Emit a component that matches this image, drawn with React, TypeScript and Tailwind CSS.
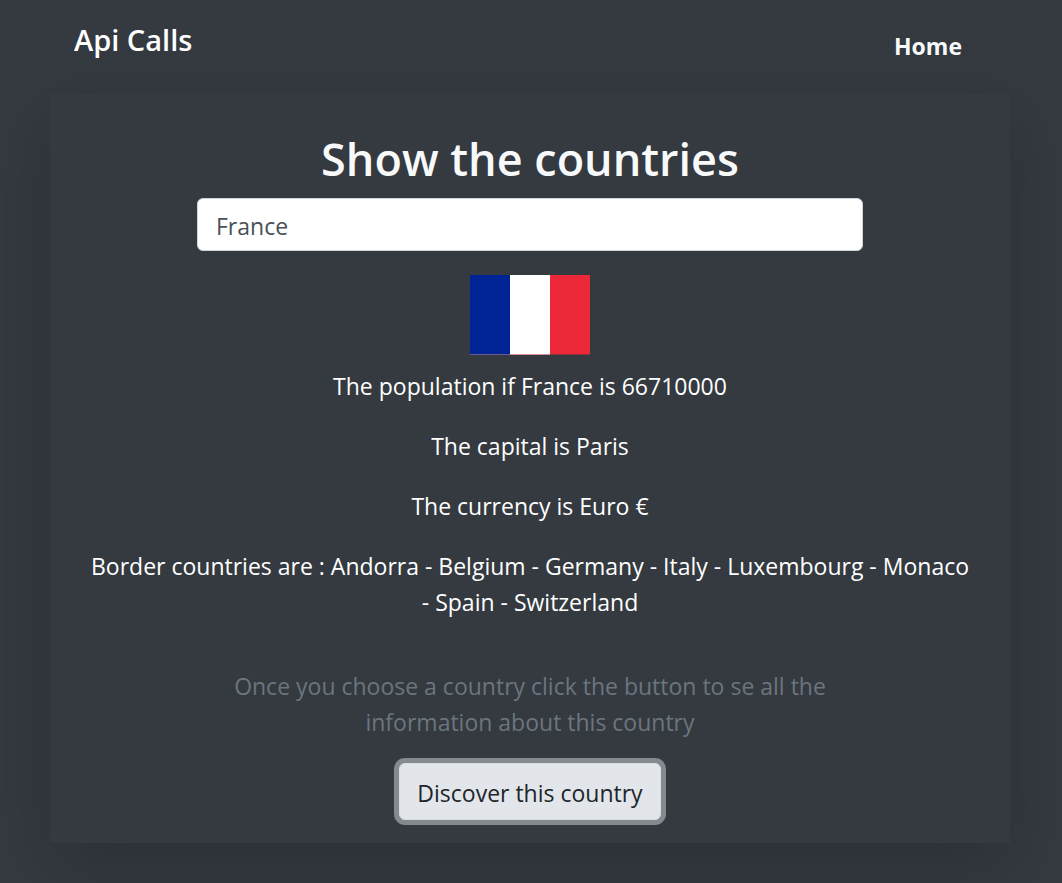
const country = {
  name: 'France',
  population: 66710000,
  capital: 'Paris',
  currency: 'Euro €',
  borders: ['Andorra', 'Belgium', 'Germany', 'Italy', 'Luxembourg', 'Monaco', 'Spain', 'Switzerland'],
};

function Header() {
  return (
    <header className="flex h-[93px] items-start justify-between px-6 pt-[18px]">
      <h3 className="text-[29px] leading-[44px] font-semibold text-white">Api Calls</h3>
      <nav className="pt-[10px] pr-6">
        <a href="#home" className="block text-[23px] leading-9 font-bold text-[#f8f9fa]">
          Home
        </a>
      </nav>
    </header>
  );
}

function FrenchFlag() {
  return (
    <svg role="img" aria-label="Flag of France" viewBox="0 0 120 80" className="mt-6 h-20 w-[120px]">
      <rect width="40" height="79" fill="#002395" />
      <rect x="40" width="40" height="79" fill="#fff" />
      <rect x="80" width="40" height="79" fill="#ed2939" />
      <rect y="79" width="40" height="1" fill="#665a9b" />
      <rect x="40" y="79" width="40" height="1" fill="#d38e98" />
      <rect x="80" y="79" width="40" height="1" fill="#91333f" />
    </svg>
  );
}

export default function App() {
  return (
    <div className="min-h-screen bg-[#343a40] pr-0.5 pb-10 font-['Open_Sans','Noto_Sans',sans-serif]">
      <div className="mx-auto max-w-[960px]">
        <Header />
        <main className="flex flex-col items-center bg-[#343a40] px-9 pt-[37px] pb-[23px] text-center text-[23px] leading-9 text-white shadow-[0_24px_72px_rgba(0,0,0,0.175)]">
          <h1 className="text-[45px] leading-[58px] font-semibold text-[#f8f9fa]">Show the countries</h1>
          <input
            type="text"
            aria-label="Country"
            defaultValue={country.name}
            className="mt-[10px] h-[53px] w-3/4 rounded-md border border-[#ced4da] bg-white px-[18px] pt-0.5 text-[23px] text-[#495057] outline-none"
          />
          <FrenchFlag />
          <div className="mt-[13px] flex flex-col gap-6">
            <p>The population if {country.name} is {country.population}</p>
            <p>The capital is {country.capital}</p>
            <p>The currency is {country.currency}</p>
            <p>Border countries are : {country.borders.join(' - ')}</p>
          </div>
          <p className="mt-12 max-w-[640px] text-[#6c757d]">
            Once you choose a country click the button to se all the information about this country
          </p>
          <button
            type="button"
            className="mt-[23px] h-[57px] rounded-md border border-[#dae0e5] bg-[#e2e6ea] px-[17px] pt-0.5 text-[#212529] ring-[5px] ring-[#868a8e]"
          >
            Discover this country
          </button>
        </main>
      </div>
    </div>
  );
}
